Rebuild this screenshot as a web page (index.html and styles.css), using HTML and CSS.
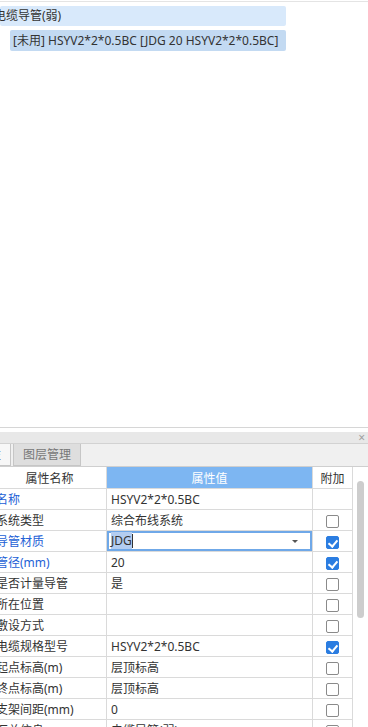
FILE: index.html
```html
<!DOCTYPE html>
<html>
<head>
    <title>属性编辑</title>
    <meta charset="UTF-8">
    <link rel="stylesheet" href="styles.css">
</head>
<body>
    <div class="tree-pane">
        <div class="tree-item level1">电缆导管(弱)</div>
        <div class="tree-item level2">[未用] HSYV2*2*0.5BC [JDG 20 HSYV2*2*0.5BC]</div>
    </div>

    <div class="panel">
        <div class="panel-title"><span class="close">×</span></div>
        <div class="tabs">
            <div class="tab active">属性</div>
            <div class="tab">图层管理</div>
        </div>
        <div class="grid-area">
            <div class="grid-clip">
                <table class="props">
                    <colgroup>
                        <col class="c-name">
                        <col class="c-value">
                        <col class="c-extra">
                    </colgroup>
                    <thead>
                        <tr>
                            <th>属性名称</th>
                            <th class="sel">属性值</th>
                            <th>附加</th>
                        </tr>
                    </thead>
                    <tbody>
                        <tr><td class="name blue">名称</td><td class="val">HSYV2*2*0.5BC</td><td></td></tr>
                        <tr><td class="name">系统类型</td><td class="val">综合布线系统</td><td><span class="chk"></span></td></tr>
                        <tr>
                            <td class="name blue">导管材质</td>
                            <td class="val editing">
                                <div class="editor"><span class="picked">JDG</span><span class="caret"></span><span class="drop"></span></div>
                            </td>
                            <td><span class="chk on"></span></td>
                        </tr>
                        <tr><td class="name blue">管径(mm)</td><td class="val">20</td><td><span class="chk on"></span></td></tr>
                        <tr><td class="name">是否计量导管</td><td class="val">是</td><td><span class="chk"></span></td></tr>
                        <tr><td class="name">所在位置</td><td class="val"></td><td><span class="chk"></span></td></tr>
                        <tr><td class="name">敷设方式</td><td class="val"></td><td><span class="chk"></span></td></tr>
                        <tr><td class="name">电缆规格型号</td><td class="val">HSYV2*2*0.5BC</td><td><span class="chk on"></span></td></tr>
                        <tr><td class="name">起点标高(m)</td><td class="val">层顶标高</td><td><span class="chk"></span></td></tr>
                        <tr><td class="name">终点标高(m)</td><td class="val">层顶标高</td><td><span class="chk"></span></td></tr>
                        <tr><td class="name">支架间距(mm)</td><td class="val">0</td><td><span class="chk"></span></td></tr>
                        <tr><td class="name">汇总信息</td><td class="val">电缆导管(弱)</td><td><span class="chk"></span></td></tr>
                    </tbody>
                </table>
            </div>
            <div class="vscroll"><div class="thumb"></div></div>
        </div>
    </div>
</body>
</html>
```

FILE: styles.css
```css
body {
    margin: 0;
    width: 368px;
    height: 727px;
    overflow: hidden;
    background: #fff;
    color: #333;
    font-family: "Noto Sans", "Noto Sans CJK SC", sans-serif;
    font-size: 12px;
}

.tree-pane {
    height: 426px;
    box-sizing: border-box;
    border-top: 1px solid #e4e4e4;
    margin-top: 1px;
    padding-top: 4px;
}
.tree-item {
    width: 286px;
    box-sizing: border-box;
    border-radius: 2px;
    white-space: nowrap;
    overflow: hidden;
}
.level1 {
    height: 20px;
    line-height: 20px;
    background: #d8e9fb;
    text-indent: -6px;
}
.level2 {
    height: 21px;
    line-height: 21px;
    background: #c3daf2;
    margin-top: 4px;
    margin-left: 10px;
    width: 276px;
    padding-left: 3px;
}

.panel {
    border-top: 1px solid #d6d6d6;
    padding-top: 4px;
    overflow: hidden;
}
.panel-title {
    height: 11px;
    background: #e8e8e8;
    border-bottom: 1px solid #d2d2d2;
    position: relative;
}
.close {
    position: absolute;
    right: 3px;
    top: -2px;
    color: #a0a0a0;
    font-size: 12px;
    line-height: 16px;
}
.tabs {
    display: flex;
    height: 22px;
    background: #f0f0f0;
    border-bottom: 1px solid #cfcfcf;
    margin-left: -33px;
}
.tab {
    height: 22px;
    line-height: 21px;
    box-sizing: border-box;
    padding: 0 9px;
    color: #777;
    border: 1px solid #c6c6c6;
    border-top: none;
    background: #dedede;
    margin-left: 2px;
}
.tab.active {
    background: #f7f7f7;
    color: #333;
    margin-left: 0;
}

.grid-area {
    display: flex;
}
.grid-clip {
    width: 352px;
    overflow: hidden;
}
.props {
    margin-left: -8px;
    width: 360px;
    table-layout: fixed;
    border-collapse: collapse;
}
.c-name { width: 114px; }
.c-value { width: 206px; }
.c-extra { width: 40px; }

.props th,
.props td {
    height: 20px;
    padding: 0;
    border: 1px solid #dadada;
    border-top: none;
    white-space: nowrap;
    overflow: hidden;
    font-weight: normal;
}
.props th {
    height: 21px;
    text-align: center;
    background: #fff;
}
.props th.sel {
    background: #7db6f2;
    color: #fff;
}
.props td {
    text-align: center;
}
.props td.name {
    text-align: left;
    padding-left: 3px;
}
.props td.blue {
    color: #2361d6;
}
.props td.val {
    text-align: left;
    padding-left: 4px;
}
.props td.editing {
    padding: 0;
}
.editor {
    height: 20px;
    line-height: 16px;
    box-sizing: border-box;
    border: 2px solid #6fa8e8;
    padding-left: 2px;
    position: relative;
}
.picked {
    background: #b3cdf0;
}
.caret {
    display: inline-block;
    width: 1px;
    height: 14px;
    background: #333;
    vertical-align: -3px;
}
.drop {
    position: absolute;
    right: 12px;
    top: 7px;
    border-left: 3px solid transparent;
    border-right: 3px solid transparent;
    border-top: 3px solid #555;
}

.chk {
    display: inline-block;
    width: 13px;
    height: 13px;
    box-sizing: border-box;
    border: 1px solid #8a8a8a;
    border-radius: 2px;
    vertical-align: middle;
    position: relative;
}
.chk.on {
    background: #2b7de1;
    border-color: #2b7de1;
}
.chk.on::after {
    content: "";
    position: absolute;
    left: 3px;
    top: 1px;
    width: 4px;
    height: 7px;
    border-right: 2px solid #fff;
    border-bottom: 2px solid #fff;
    transform: rotate(40deg);
}

.vscroll {
    width: 16px;
    height: 260px;
    border-left: 1px solid #dadada;
    box-sizing: border-box;
    padding-left: 4px;
    padding-top: 14px;
}
.thumb {
    width: 7px;
    height: 137px;
    background: #cdcdcd;
    border-radius: 4px;
}
```
